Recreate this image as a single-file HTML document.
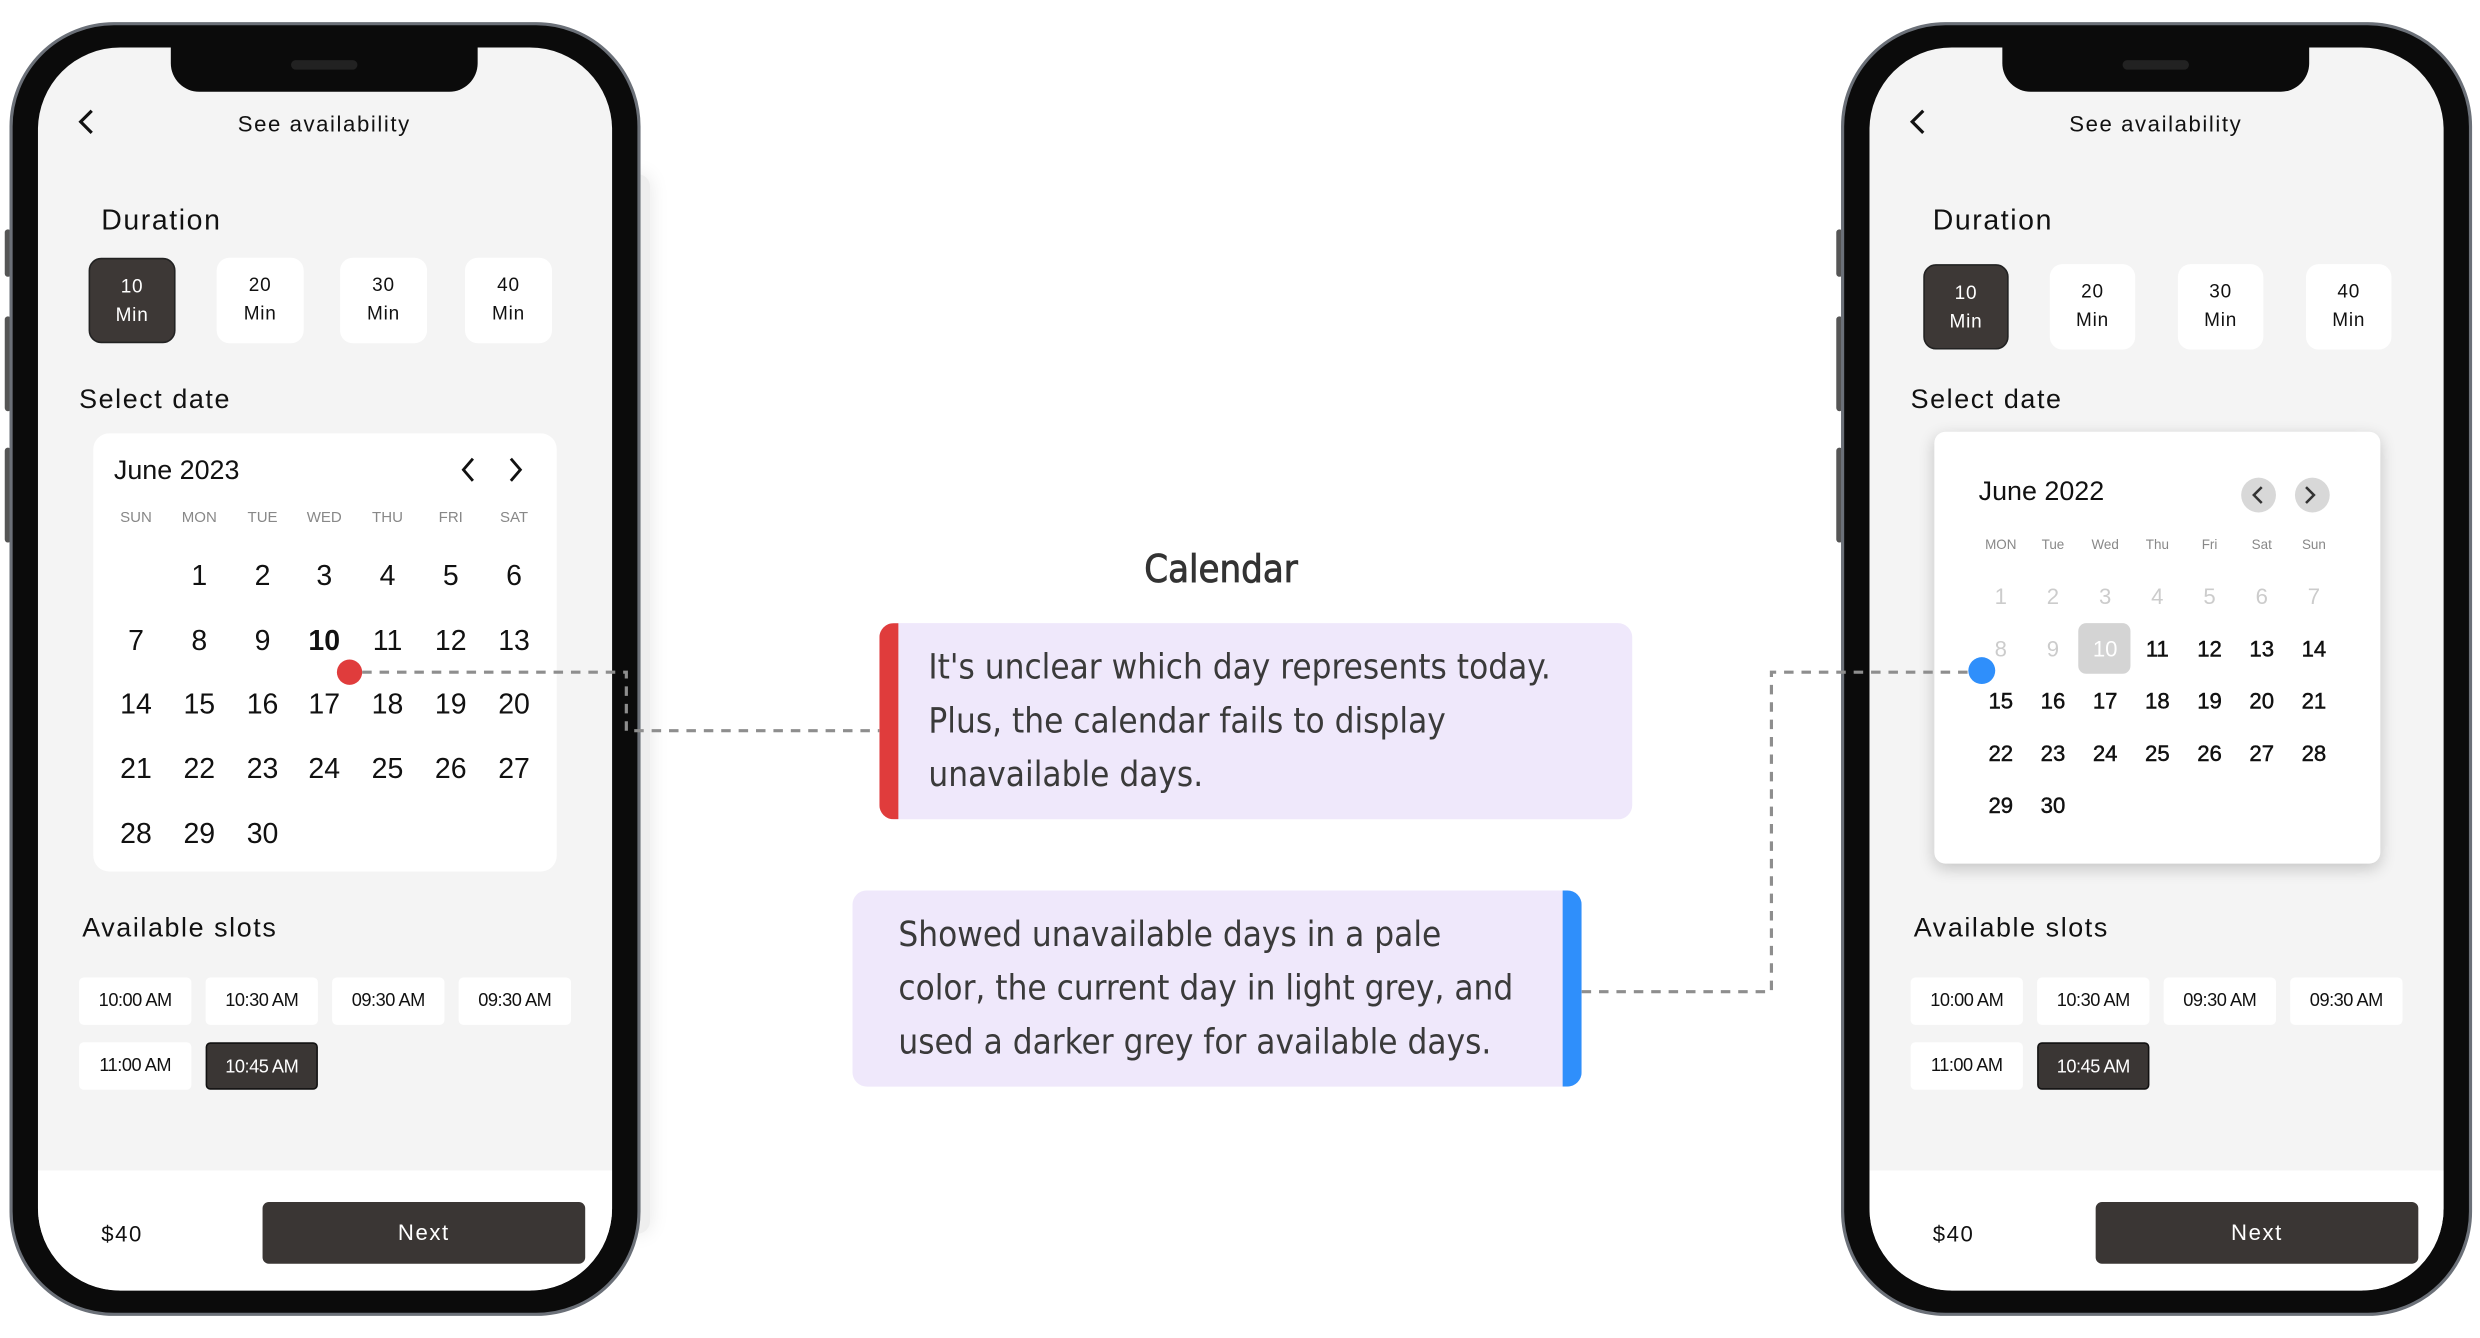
<!DOCTYPE html>
<html><head><meta charset="utf-8"><style>
*{margin:0;padding:0;box-sizing:border-box}
html,body{width:2480px;height:1338px;overflow:hidden;background:#fff}
#w{position:absolute;left:0;top:0;width:1568px;height:846px;transform:scale(1.58163);transform-origin:0 0;font-family:"Liberation Sans",sans-serif;color:#111}
.a{position:absolute}
.frame{position:absolute;width:399px;height:818px;border-radius:66px;background:#0b0b0b;border:2px solid #6b7078}
.screen{position:absolute;left:16px;top:14px;width:363px;height:786px;border-radius:52px;background:#f4f4f4;overflow:hidden}
.notch{position:absolute;left:84px;top:0;width:194px;height:28px;background:#0b0b0b;border-radius:0 0 18px 18px}
.t{position:absolute;white-space:nowrap;line-height:1}
.c{transform:translateX(-50%)}
.btn{position:absolute;border-radius:8px;background:#fff;text-align:center;font-size:12px;line-height:18px;padding-top:8px;letter-spacing:.5px}
.btn.d{background:#3d3836;color:#fff;border:1px solid #222}
.slot{position:absolute;height:30px;width:71px;background:#fff;border-radius:3px;font-size:11.5px;text-align:center;line-height:30px;letter-spacing:-.3px}
.slot.d{background:#3a3634;color:#fff;border:1px solid #111}
.bot{position:absolute;left:0;top:710px;width:363px;height:76px;background:#fff}
.next{position:absolute;top:20px;width:204px;height:39px;background:#3a3634;border-radius:4px;color:#fff;text-align:center;line-height:39px;font-size:14px;letter-spacing:1px}
.side{position:absolute;width:4px;background:#555;border-radius:2px}
.note{position:absolute;background:#efe8fb;border-radius:9px;overflow:hidden;color:#3a3a3a}
.note .t{font-family:"DejaVu Sans Condensed","Liberation Sans",sans-serif;font-size:22px;letter-spacing:0}
</style></head><body><div id="w">

<!-- LEFT PHONE -->
<div class="side" style="left:3px;top:145px;height:30px"></div>
<div class="side" style="left:3px;top:200px;height:60px"></div>
<div class="side" style="left:3px;top:283px;height:60px"></div>
<div class="a" style="left:395px;top:110px;width:16px;height:670px;background:#eee;border-radius:8px;box-shadow:0 0 12px rgba(0,0,0,.1)"></div>
<div class="frame" style="left:6px;top:14px">
<div class="screen">
<div class="notch"><div class="a" style="left:76px;top:8px;width:42px;height:6px;border-radius:3px;background:#222"></div></div>
<svg class="a" style="left:24px;top:38px" width="14" height="18"><path d="M10 2 L3 9 L10 16" fill="none" stroke="#111" stroke-width="2"/></svg>
<div class="t c" style="left:181px;top:41px;font-size:14px;letter-spacing:1px">See availability</div>
<div class="t" style="left:40px;top:100px;font-size:18px;letter-spacing:1px">Duration</div>
<div class="btn d" style="left:32px;top:133px;width:55px;height:54px">10<br>Min</div>
<div class="btn" style="left:113px;top:133px;width:55px;height:54px">20<br>Min</div>
<div class="btn" style="left:191px;top:133px;width:55px;height:54px">30<br>Min</div>
<div class="btn" style="left:270px;top:133px;width:55px;height:54px">40<br>Min</div>
<div class="t" style="left:26px;top:214px;font-size:17px;letter-spacing:1px">Select date</div>
<div class="a" style="left:35px;top:244px;width:293px;height:277px;background:#fff;border-radius:10px">
<div class="t" style="left:13px;top:15px;font-size:17px">June 2023</div>
<svg class="a" style="left:230px;top:14px" width="50" height="18"><path d="M10 2 L4 9 L10 16 M34 2 L40 9 L34 16" fill="none" stroke="#111" stroke-width="1.8"/></svg>
</div>
<div class="a" style="left:0;top:0">
<div class="t c" style="left:62px;top:293px;font-size:9.5px;color:#888">SUN</div>
<div class="t c" style="left:102px;top:293px;font-size:9.5px;color:#888">MON</div>
<div class="t c" style="left:142px;top:293px;font-size:9.5px;color:#888">TUE</div>
<div class="t c" style="left:181px;top:293px;font-size:9.5px;color:#888">WED</div>
<div class="t c" style="left:221px;top:293px;font-size:9.5px;color:#888">THU</div>
<div class="t c" style="left:261px;top:293px;font-size:9.5px;color:#888">FRI</div>
<div class="t c" style="left:301px;top:293px;font-size:9.5px;color:#888">SAT</div>
</div>
<div class="a" id="lcal" style="left:0;top:0;font-size:18px"></div>
<div class="t" style="left:28px;top:548px;font-size:17px;letter-spacing:1px">Available slots</div>
<div class="slot" style="left:26px;top:588px">10:00 AM</div>
<div class="slot" style="left:106px;top:588px">10:30 AM</div>
<div class="slot" style="left:186px;top:588px">09:30 AM</div>
<div class="slot" style="left:266px;top:588px">09:30 AM</div>
<div class="slot" style="left:26px;top:629px">11:00 AM</div>
<div class="slot d" style="left:106px;top:629px">10:45 AM</div>
<div class="bot"><div class="t" style="left:40px;top:33px;font-size:14px;letter-spacing:1px">$40</div><div class="next" style="left:142px">Next</div></div>
</div></div>

<!-- RIGHT PHONE -->
<div class="side" style="left:1161px;top:145px;height:30px"></div>
<div class="side" style="left:1161px;top:200px;height:60px"></div>
<div class="side" style="left:1161px;top:283px;height:60px"></div>
<div class="frame" style="left:1164px;top:14px">
<div class="screen">
<div class="notch"><div class="a" style="left:76px;top:8px;width:42px;height:6px;border-radius:3px;background:#222"></div></div>
<svg class="a" style="left:24px;top:38px" width="14" height="18"><path d="M10 2 L3 9 L10 16" fill="none" stroke="#111" stroke-width="2"/></svg>
<div class="t c" style="left:181px;top:41px;font-size:14px;letter-spacing:1px">See availability</div>
<div class="t" style="left:40px;top:100px;font-size:18px;letter-spacing:1px">Duration</div>
<div class="btn d" style="left:34px;top:137px;width:54px;height:54px">10<br>Min</div>
<div class="btn" style="left:114px;top:137px;width:54px;height:54px">20<br>Min</div>
<div class="btn" style="left:195px;top:137px;width:54px;height:54px">30<br>Min</div>
<div class="btn" style="left:276px;top:137px;width:54px;height:54px">40<br>Min</div>
<div class="t" style="left:26px;top:214px;font-size:17px;letter-spacing:1px">Select date</div>
<div class="a" style="left:41px;top:243px;width:282px;height:273px;background:#fff;border-radius:7px;box-shadow:0 3px 10px rgba(0,0,0,.2)">
<div class="t" style="left:28px;top:29px;font-size:17px">June 2022</div>
<div class="a" style="left:194px;top:29px;width:22px;height:22px;border-radius:50%;background:#d8d8d8"></div>
<div class="a" style="left:228px;top:29px;width:22px;height:22px;border-radius:50%;background:#d8d8d8"></div>
<svg class="a" style="left:194px;top:29px" width="56" height="22"><path d="M13 6 L8 11 L13 16 M41 6 L46 11 L41 16" fill="none" stroke="#333" stroke-width="1.6"/></svg>
<div class="a" style="left:91px;top:121px;width:33px;height:32px;border-radius:5px;background:#d4d4d4"></div>
</div>
<div class="a" id="rcal" style="left:0;top:0"></div>
<div class="t" style="left:28px;top:548px;font-size:17px;letter-spacing:1px">Available slots</div>
<div class="slot" style="left:26px;top:588px">10:00 AM</div>
<div class="slot" style="left:106px;top:588px">10:30 AM</div>
<div class="slot" style="left:186px;top:588px">09:30 AM</div>
<div class="slot" style="left:266px;top:588px">09:30 AM</div>
<div class="slot" style="left:26px;top:629px">11:00 AM</div>
<div class="slot d" style="left:106px;top:629px">10:45 AM</div>
<div class="bot"><div class="t" style="left:40px;top:33px;font-size:14px;letter-spacing:1px">$40</div><div class="next" style="left:143px">Next</div></div>
</div></div>

<!-- connectors -->
<svg class="a" style="left:0;top:0" width="1568" height="846">
<path d="M229 425 H396 V462 H556" fill="none" stroke="#8e8e8e" stroke-width="2" stroke-dasharray="6 5"/>
<path d="M1000 627 H1120 V425 H1253" fill="none" stroke="#8e8e8e" stroke-width="2" stroke-dasharray="6 5"/>
<circle cx="221" cy="425" r="8" fill="#e03c3c"/>
<circle cx="1253" cy="424" r="8.5" fill="#2f8ffb"/>
</svg>

<div class="t c" style="left:772px;top:348px;font-size:24px;color:#333;font-family:'DejaVu Sans Condensed','Liberation Sans',sans-serif;-webkit-text-stroke:.5px #333">Calendar</div>
<div class="note" style="left:556px;top:394px;width:476px;height:124px">
<div class="a" style="left:0;top:0;width:12px;height:124px;background:#e03c3c"></div>
<div class="t" style="left:31px;top:18px">It's unclear which day represents today.</div>
<div class="t" style="left:31px;top:52px">Plus, the calendar fails to display</div>
<div class="t" style="left:31px;top:86px">unavailable days.</div>
</div>
<div class="note" style="left:539px;top:563px;width:461px;height:124px">
<div class="a" style="right:0;top:0;width:12px;height:124px;background:#2f8ffb"></div>
<div class="t" style="left:29px;top:18px">Showed unavailable days in a pale</div>
<div class="t" style="left:29px;top:52px">color, the current day in light grey, and</div>
<div class="t" style="left:29px;top:86px">used a darker grey for available days.</div>
</div>

</div>
<script>
(function(){
var L=document.getElementById('lcal'),h='';
var cx=[62,102,142,181,221,261,301],ry=[325,366,406,447,488];
for(var d=1;d<=30;d++){var i=d,r=Math.floor(i/7),c=i%7;
h+='<div class="t c" style="left:'+cx[c]+'px;top:'+ry[r]+'px;font-size:18px;'+(d==10?'font-weight:bold':'')+'">'+d+'</div>';}
L.innerHTML=h;
var R=document.getElementById('rcal');h='';
var rx=[83,116,149,182,215,248,281],rr=[340,373,406,439,472];
var hd=['MON','Tue','Wed','Thu','Fri','Sat','Sun'];
for(var k=0;k<7;k++)h+='<div class="t c" style="left:'+rx[k]+'px;top:310px;font-size:8.5px;color:#888">'+hd[k]+'</div>';
for(var d=1;d<=30;d++){var i=d-1,r=Math.floor(i/7),c=i%7;
var col=d<10?'#ccc':(d==10?'#fff':'#111');
h+='<div class="t c" style="left:'+rx[c]+'px;top:'+rr[r]+'px;font-size:14px;color:'+col+';'+(d>10?'-webkit-text-stroke:.3px #111':'')+'">'+d+'</div>';}
R.innerHTML=h;
})();
</script>
</body></html>
